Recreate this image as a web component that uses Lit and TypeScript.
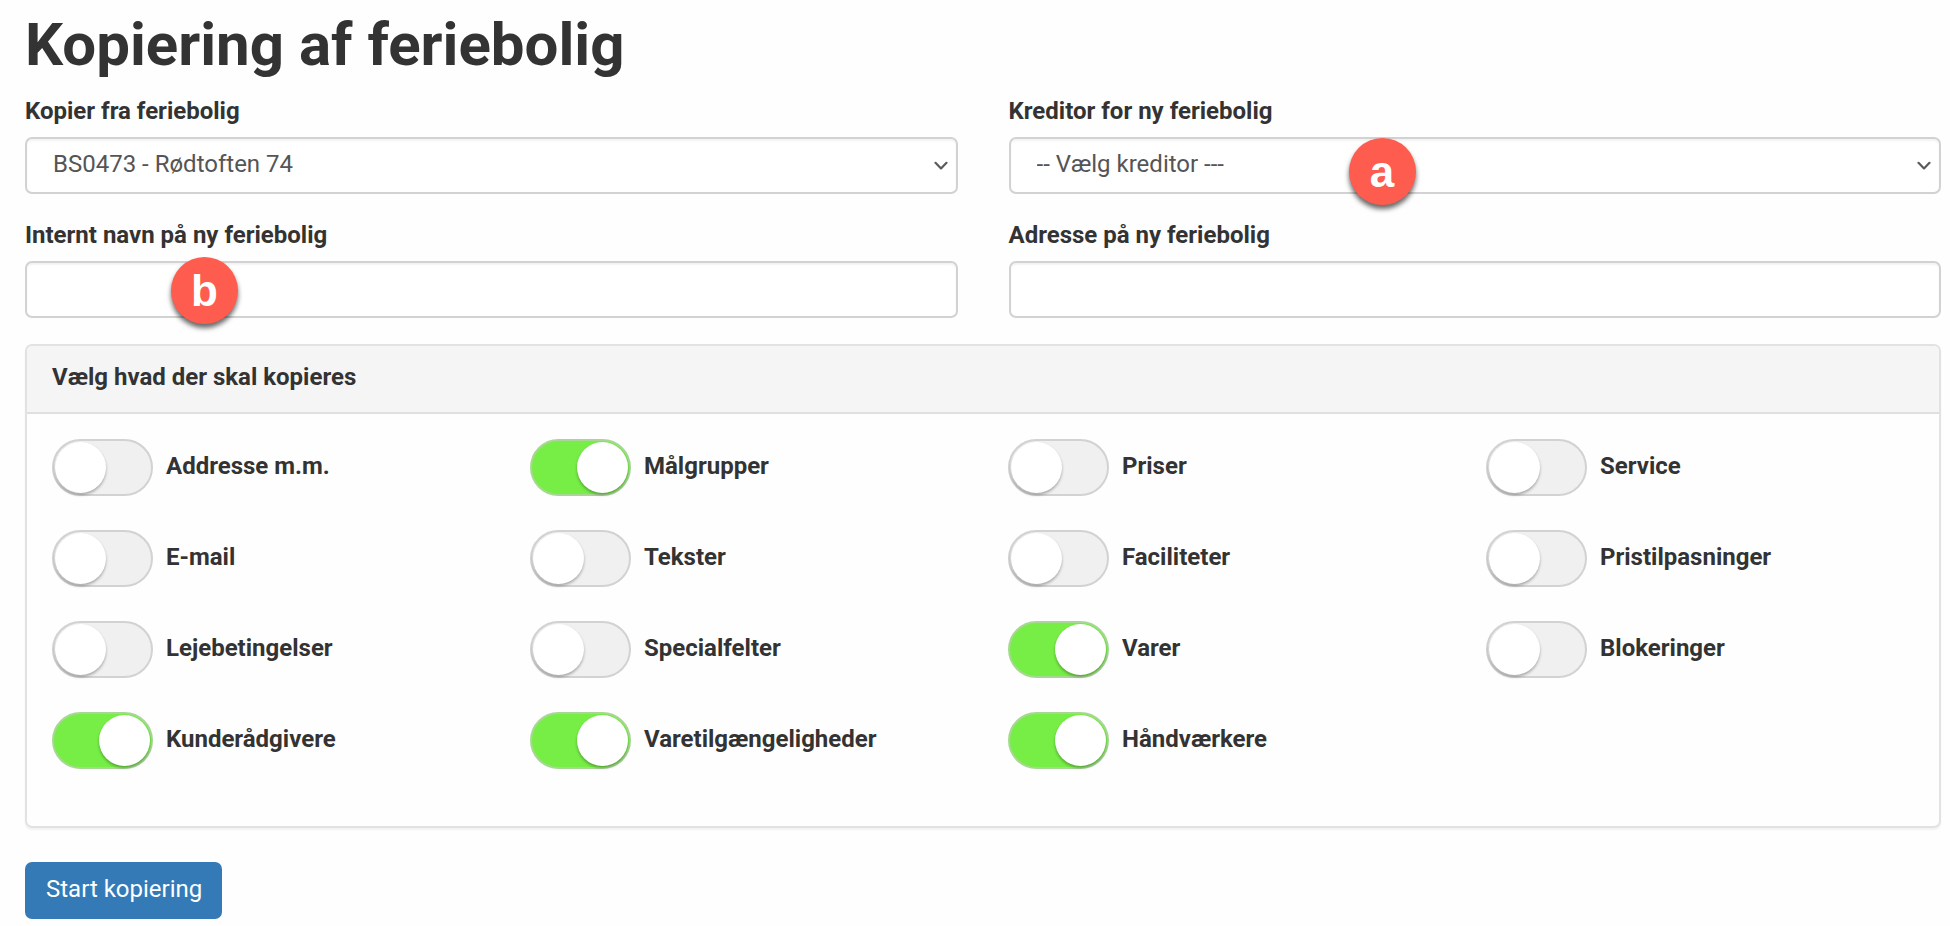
import { LitElement, html, css, svg } from "lit";
import { customElement, property, state } from "lit/decorators.js";

interface CopyOption {
  id: string;
  label: string;
  on: boolean;
}

@customElement("marker-badge")
export class MarkerBadge extends LitElement {
  static styles = css`
    :host {
      display: flex;
      align-items: center;
      justify-content: center;
      width: 67px;
      height: 67px;
      border-radius: 50%;
      background: #fe5c4e;
      color: #fff;
      font: bold 44px/50px "Liberation Sans", Arial, sans-serif;
      box-shadow: 0 4px 5px rgba(0, 0, 0, 0.6);
      pointer-events: none;
    }
  `;

  render() {
    return html`<slot></slot>`;
  }
}

@customElement("toggle-option")
export class ToggleOption extends LitElement {
  @property() label = "";
  @property({ type: Boolean }) checked = false;

  static styles = css`
    :host {
      display: flex;
      align-items: center;
      gap: 13px;
      min-width: 0;
    }
    .switch {
      appearance: none;
      box-sizing: border-box;
      flex: none;
      width: 101px;
      height: 57px;
      margin: 0;
      padding: 1px;
      border: 2px solid #d2d2d2;
      border-radius: 29px;
      background: #f0f0f0;
      cursor: pointer;
    }
    .switch::before {
      content: "";
      display: block;
      width: 51px;
      height: 51px;
      border-radius: 50%;
      background: #fff;
      box-shadow: 0 2px 3px rgba(0, 0, 0, 0.3);
    }
    .switch:checked {
      border-color: #a8d795;
      background: #77ee46;
    }
    .switch:checked::before {
      margin-left: auto;
    }
    .text {
      padding-bottom: 3px;
      font-weight: 700;
      cursor: pointer;
    }
  `;

  private toggle(e: Event) {
    this.checked = (e.target as HTMLInputElement).checked;
  }

  render() {
    return html`
      <input class="switch" id="switch" type="checkbox" .checked=${this.checked} @change=${this.toggle} />
      <label class="text" for="switch">${this.label}</label>
    `;
  }
}

const chevron = svg`<path d="M1.5 1.8 L7 7.4 L12.5 1.8" fill="none" stroke="#5a5a5a" stroke-width="2.2" stroke-linecap="round" stroke-linejoin="round" />`;

@customElement("app-root")
export class AppRoot extends LitElement {
  @state() private options: CopyOption[] = [
    { id: "address", label: "Addresse m.m.", on: false },
    { id: "audiences", label: "Målgrupper", on: true },
    { id: "prices", label: "Priser", on: false },
    { id: "service", label: "Service", on: false },
    { id: "email", label: "E-mail", on: false },
    { id: "texts", label: "Tekster", on: false },
    { id: "facilities", label: "Faciliteter", on: false },
    { id: "adjustments", label: "Pristilpasninger", on: false },
    { id: "terms", label: "Lejebetingelser", on: false },
    { id: "fields", label: "Specialfelter", on: false },
    { id: "items", label: "Varer", on: true },
    { id: "blocks", label: "Blokeringer", on: false },
    { id: "advisers", label: "Kunderådgivere", on: true },
    { id: "availability", label: "Varetilgængeligheder", on: true },
    { id: "craftsmen", label: "Håndværkere", on: true },
  ];

  static styles = css`
    :host {
      display: block;
      padding: 11px 9px 7px 25px;
      background: #fefefe;
      color: #333;
      font-family: Roboto, "Liberation Sans", sans-serif;
      font-size: 24px;
      line-height: 34px;
    }
    * {
      box-sizing: border-box;
    }
    .title {
      margin: 0 0 16px;
      font-size: 60px;
      font-weight: 700;
      line-height: 67px;
    }
    .fields {
      display: grid;
      grid-template-columns: 1fr 1fr;
      gap: 24px 51px;
      margin-bottom: 26px;
    }
    .field {
      display: flex;
      flex-direction: column;
      gap: 9px;
      min-width: 0;
    }
    .label {
      font-weight: 700;
    }
    .box {
      display: grid;
      position: relative;
      align-items: center;
    }
    .control {
      grid-area: 1 / 1;
      appearance: none;
      width: 100%;
      height: 57px;
      margin: 0;
      padding: 0 50px 3px 26px;
      border: 2px solid #d2d2d2;
      border-radius: 7px;
      background: #fff;
      box-shadow: inset 0 2px 2px rgba(0, 0, 0, 0.05);
      color: #555;
      font: inherit;
    }
    .arrow {
      grid-area: 1 / 1;
      justify-self: end;
      margin-right: 10px;
      pointer-events: none;
    }
    .marker {
      position: absolute;
    }
    .marker-a {
      top: 1px;
      left: 340px;
    }
    .marker-b {
      top: -4px;
      left: 146px;
    }
    .panel {
      margin-bottom: 34px;
      border: 2px solid #e2e2e2;
      border-radius: 7px;
      box-shadow: 0 2px 2px rgba(0, 0, 0, 0.05);
    }
    .panel-title {
      margin: 0;
      padding: 14px 25px 18px;
      border-bottom: 2px solid #e0e0e0;
      border-radius: 5px 5px 0 0;
      background: #f5f5f5;
      font-size: 24px;
      font-weight: 700;
      line-height: 34px;
    }
    .options {
      display: grid;
      grid-template-columns: repeat(4, 1fr);
      row-gap: 34px;
      padding: 25px 0 57px;
    }
    .option {
      padding-left: 25px;
    }
    .submit {
      display: block;
      height: 57px;
      padding: 0 20px 3px 21px;
      border: 0;
      border-radius: 7px;
      background: #337ab7;
      color: #fff;
      font: inherit;
      cursor: pointer;
    }
  `;

  private arrow() {
    return html`<svg class="arrow" width="14" height="9" viewBox="0 0 14 9" aria-hidden="true">${chevron}</svg>`;
  }

  render() {
    return html`
      <h1 class="title">Kopiering af feriebolig</h1>
      <form @submit=${(e: Event) => e.preventDefault()}>
        <div class="fields">
          <div class="field">
            <label class="label" for="source">Kopier fra feriebolig</label>
            <div class="box">
              <select class="control" id="source">
                <option>BS0473 - Rødtoften 74</option>
              </select>
              ${this.arrow()}
            </div>
          </div>
          <div class="field">
            <label class="label" for="creditor">Kreditor for ny feriebolig</label>
            <div class="box">
              <select class="control" id="creditor">
                <option>-- Vælg kreditor ---</option>
              </select>
              ${this.arrow()}
              <marker-badge class="marker marker-a">a</marker-badge>
            </div>
          </div>
          <div class="field">
            <label class="label" for="name">Internt navn på ny feriebolig</label>
            <div class="box">
              <input class="control" id="name" type="text" />
              <marker-badge class="marker marker-b">b</marker-badge>
            </div>
          </div>
          <div class="field">
            <label class="label" for="address">Adresse på ny feriebolig</label>
            <div class="box">
              <input class="control" id="address" type="text" />
            </div>
          </div>
        </div>
        <section class="panel">
          <h2 class="panel-title">Vælg hvad der skal kopieres</h2>
          <div class="options">
            ${this.options.map(
              (o) => html`<toggle-option class="option" .label=${o.label} .checked=${o.on}></toggle-option>`,
            )}
          </div>
        </section>
        <button class="submit" type="submit">Start kopiering</button>
      </form>
    `;
  }
}
